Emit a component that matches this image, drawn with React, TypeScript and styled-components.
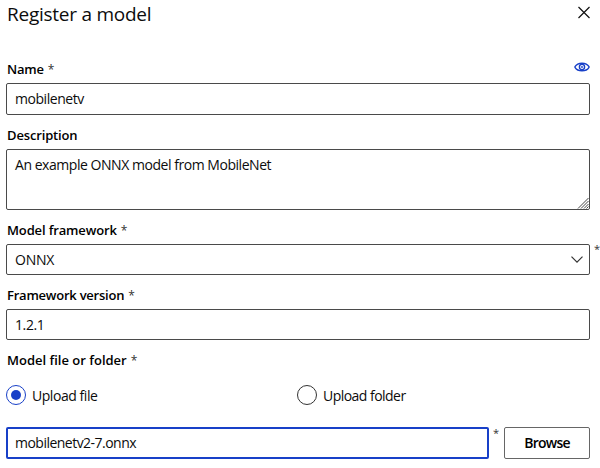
import React from "react";
import styled, { createGlobalStyle } from "styled-components";

const GlobalStyle = createGlobalStyle`
  * { box-sizing: border-box; }
  body { margin: 0; background: #fff; color: #0c0c0c; font: 14px/20px "Open Sans", "Noto Sans", sans-serif; }
`;

const Panel = styled.form`
  width: 600px;
  height: 468px;
  overflow: hidden;
  padding: 0 10px 0 6px;
  display: flex;
  flex-direction: column;
`;

const Header = styled.header`
  display: flex;
  justify-content: space-between;
  height: 59px;
`;

const Title = styled.h1`
  margin: 1px 0 0 1px;
  font-size: 19px;
  line-height: 26px;
  font-weight: 400;
  letter-spacing: -0.25px;
`;

const IconButton = styled.button`
  display: flex;
  height: 14px;
  padding: 0;
  border: 0;
  background: none;
`;

const CloseButton = styled(IconButton)`
  margin-top: 6px;
`;

const PreviewButton = styled(IconButton)`
  margin-top: 3px;
`;

const Field = styled.div<{ $height: number }>`
  height: ${(p) => p.$height}px;
  display: flex;
  flex-direction: column;
`;

const LabelRow = styled.div`
  display: flex;
  justify-content: space-between;
  height: 24px;
  flex: none;
  padding-left: 1px;
`;

const Label = styled.label`
  display: flex;
  gap: 4px;
  white-space: pre;
`;

const LabelText = styled.span<{ $track: number }>`
  font-size: 13px;
  font-weight: 600;
  color: #000;
  letter-spacing: ${(p) => p.$track}px;
`;

const Star = styled.span`
  font-size: 12px;
  line-height: 22px;
  color: #333;
`;

const Box = styled.div<{ $height: number; $focused?: boolean }>`
  position: relative;
  flex: none;
  height: ${(p) => p.$height}px;
  display: flex;
  align-items: center;
  justify-content: space-between;
  padding: 0 7px 0 ${(p) => (p.$focused ? 7 : 8)}px;
  border: ${(p) => (p.$focused ? "2px solid #1840c8" : "1px solid #4a4a4a")};
  border-radius: 2px;
`;

const SelectBox = styled(Box)`
  padding-right: 6px;
`;

const AreaBox = styled(Box)`
  align-items: flex-start;
  padding-top: 5px;
`;

const Value = styled.span<{ $track: number }>`
  font-size: 14px;
  line-height: 20px;
  white-space: pre;
  letter-spacing: ${(p) => p.$track}px;
`;

const Grip = styled.svg`
  position: absolute;
  right: 0;
  bottom: 0;
`;

const OuterStar = styled(Star)`
  position: absolute;
  left: 587px;
  top: -7px;
  font-size: 11px;
`;

const RadioGroup = styled.div`
  display: grid;
  grid-template-columns: 291px 1fr;
  height: 42px;
  align-items: start;
`;

const Radio = styled.label`
  display: flex;
  align-items: flex-start;
  gap: 6px;
`;

const RadioText = styled(Value)`
  padding-top: 1px;
`;

const Dial = styled.span<{ $checked?: boolean }>`
  width: 20px;
  height: 20px;
  display: grid;
  place-items: center;
  border: 1px solid ${(p) => (p.$checked ? "#1840c8" : "#333")};
  border-radius: 50%;
  &::after {
    content: "";
    width: 10px;
    height: 10px;
    border-radius: 50%;
    background: ${(p) => (p.$checked ? "#1840c8" : "transparent")};
  }
`;

const FileRow = styled.div`
  display: grid;
  grid-template-columns: 483px 15px 86px;
  height: 32px;
`;

const FileStar = styled(Star)`
  padding-left: 4px;
  margin-top: -5px;
  font-size: 11px;
`;

const Browse = styled.button`
  height: 32px;
  padding: 0;
  border: 1px solid #666;
  border-radius: 2px;
  background: #fff;
  color: #000;
  font: 600 14px/20px "Open Sans", "Noto Sans", sans-serif;
  letter-spacing: -0.75px;
`;

const Chevron = () => (
  <svg width="12" height="8" viewBox="0 0 12 8" fill="none" stroke="#333" strokeWidth="1.2">
    <path d="M.5 .7 6 6.200 11.500 .7" />
  </svg>
);

const Eye = () => (
  <svg width="16" height="10" viewBox="0 0 16 10" fill="none" stroke="#1840c8" strokeWidth="1.4">
    <path d="M1 5.300V4.700C2.500 2.200 5 1.200 8 1.200s5.500 1 7 3.500v.6C13.500 7.800 11 8.800 8 8.800S2.500 7.800 1 5.300Z" />
    <circle cx="8" cy="5" r="2.600" />
    <circle cx="8" cy="5" r=".9" fill="#1840c8" stroke="none" />
  </svg>
);

export default function App() {
  return (
    <Panel>
      <GlobalStyle />
      <Header>
        <Title>Register a model</Title>
        <CloseButton type="button" aria-label="Close">
          <svg width="12" height="13" viewBox="0 0 12 13" stroke="#111" strokeWidth="1.2">
            <path d="m.5 1 11 11M11.500 1 .5 12" />
          </svg>
        </CloseButton>
      </Header>
      <Field $height={66}>
        <LabelRow>
          <Label><LabelText $track={-0.25}>Name</LabelText><Star>*</Star></Label>
          <PreviewButton type="button" aria-label="Preview"><Eye /></PreviewButton>
        </LabelRow>
        <Box $height={32}><Value $track={-0.45}>mobilenetv</Value></Box>
      </Field>
      <Field $height={95}>
        <LabelRow><Label><LabelText $track={-0.15}>Description</LabelText></Label></LabelRow>
        <AreaBox $height={61}>
          <Value $track={-0.46}>An example ONNX model from MobileNet</Value>
          <Grip width="12" height="12" viewBox="0 0 12 12" stroke="#444" strokeWidth="1">
            <path d="M1 11.500 11.500 1M4 11.500 11.500 4M7 11.500 11.500 7M9.500 11.500 11.500 9.500" />
          </Grip>
        </AreaBox>
      </Field>
      <Field $height={65}>
        <LabelRow><Label><LabelText $track={-0.14}>Model framework</LabelText><Star>*</Star></Label></LabelRow>
        <SelectBox $height={31}>
          <Value $track={-0.2}>ONNX</Value>
          <Chevron />
          <OuterStar>*</OuterStar>
        </SelectBox>
      </Field>
      <Field $height={65}>
        <LabelRow><Label><LabelText $track={-0.23}>Framework version</LabelText><Star>*</Star></Label></LabelRow>
        <Box $height={31}><Value $track={-0.4}>1.2.1</Value></Box>
      </Field>
      <Field $height={35}>
        <LabelRow><Label><LabelText $track={0}>Model file or folder</LabelText><Star>*</Star></Label></LabelRow>
      </Field>
      <RadioGroup>
        <Radio><Dial $checked /><RadioText $track={-0.45}>Upload file</RadioText></Radio>
        <Radio><Dial /><RadioText $track={-0.53}>Upload folder</RadioText></Radio>
      </RadioGroup>
      <FileRow>
        <Box $height={32} $focused><Value $track={-0.52}>mobilenetv2-7.onnx</Value></Box>
        <FileStar>*</FileStar>
        <Browse type="button">Browse</Browse>
      </FileRow>
    </Panel>
  );
}
